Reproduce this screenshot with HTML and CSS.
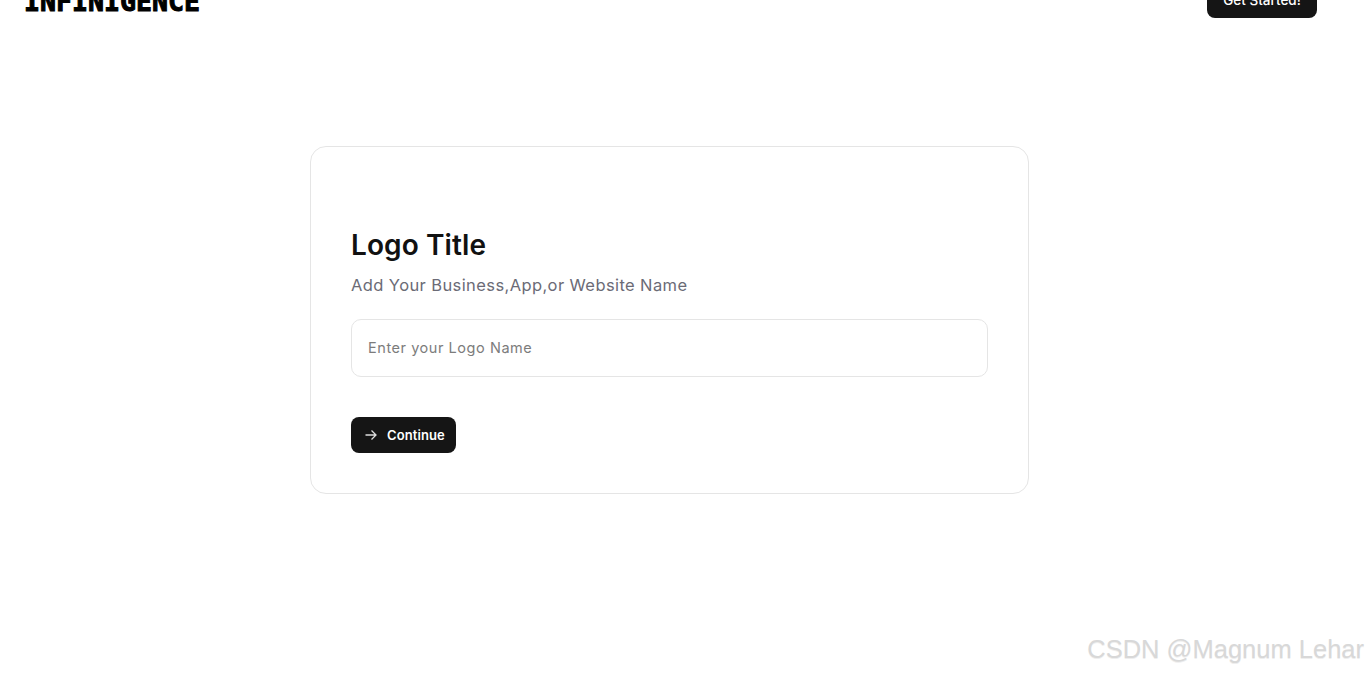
FILE: index.html
```html
<!DOCTYPE html>
<html lang="en">
<head>
    <meta charset="UTF-8">
    <meta name="viewport" content="width=device-width, initial-scale=1.0">
    <title>Logo Title</title>
    <link rel="stylesheet" href="styles.css">
</head>
<body>
    <header class="topbar">
        <div class="logo">INFINIGENCE</div>
        <button class="start-btn">Get Started!</button>
    </header>

    <main class="card">
        <h1 class="card-title">Logo Title</h1>
        <p class="card-sub">Add Your Business,App,or Website Name</p>
        <input class="logo-input" type="text" placeholder="Enter your Logo Name">
        <button class="continue-btn">
            <svg class="arrow" width="14" height="14" viewBox="0 0 14 14" fill="none" stroke="currentColor" stroke-width="1.3">
                <path d="M1.5 7h10.5M7.5 2.5 12 7 7.5 11.5"/>
            </svg>
            Continue
        </button>
    </main>

    <div class="watermark">CSDN @Magnum Lehar</div>
</body>
</html>
```

FILE: styles.css
```css
html, body {
    height: 100%;
}
body {
    margin: 0;
    font-family: Inter, "Liberation Sans", sans-serif;
    background-color: #fff;
    color: #111;
    overflow: hidden;
    position: relative;
}
.topbar {
    height: 18px;
    padding: 0 51px 0 24px;
    display: flex;
    justify-content: space-between;
    align-items: flex-end;
    overflow: hidden;
}
.logo {
    font-family: "DejaVu Sans Mono", monospace;
    font-weight: 700;
    font-size: 26.6px;
    line-height: 30px;
    margin-bottom: 1px;
    color: #000;
    -webkit-text-stroke: 1px #000;
    flex-shrink: 0;
}
.start-btn {
    width: 110px;
    height: 36px;
    flex-shrink: 0;
    border: none;
    border-radius: 8px;
    background-color: #151515;
    color: #fff;
    font-family: inherit;
    font-size: 13.5px;
    font-weight: 500;
}
.card {
    box-sizing: border-box;
    width: 719px;
    height: 348px;
    margin: 128px 0 0 310px;
    padding: 80px 40px 40px;
    border: 1px solid #e5e5e5;
    border-radius: 16px;
}
.card-title {
    margin: 0;
    font-size: 28px;
    line-height: 36px;
    font-weight: 600;
    letter-spacing: 0.1px;
}
.card-sub {
    margin: 10px 0 0;
    font-size: 16.5px;
    line-height: 24px;
    letter-spacing: 0.4px;
    color: #6b6b76;
}
.logo-input {
    display: block;
    box-sizing: border-box;
    width: 100%;
    height: 58px;
    margin-top: 22px;
    padding: 0 16px 2px;
    border: 1px solid #e5e5e5;
    border-radius: 10px;
    font-family: inherit;
    font-size: 14.5px;
    letter-spacing: 0.55px;
}
.logo-input::placeholder {
    color: #7c7c7c;
    opacity: 1;
}
.continue-btn {
    display: flex;
    align-items: center;
    gap: 9px;
    width: 105px;
    height: 36px;
    margin-top: 40px;
    padding: 0 0 0 13px;
    border: none;
    border-radius: 8px;
    background-color: #151515;
    color: #fff;
    font-family: inherit;
    font-size: 13px;
    font-weight: 600;
    letter-spacing: 0.1px;
}
.arrow {
    color: #ddd;
}
.watermark {
    position: absolute;
    right: 4px;
    bottom: 9px;
    font-family: "Liberation Sans", sans-serif;
    font-size: 25.5px;
    color: #d8d8d8;
    text-shadow: 0 1px 0 #eee;
    white-space: nowrap;
}
```
